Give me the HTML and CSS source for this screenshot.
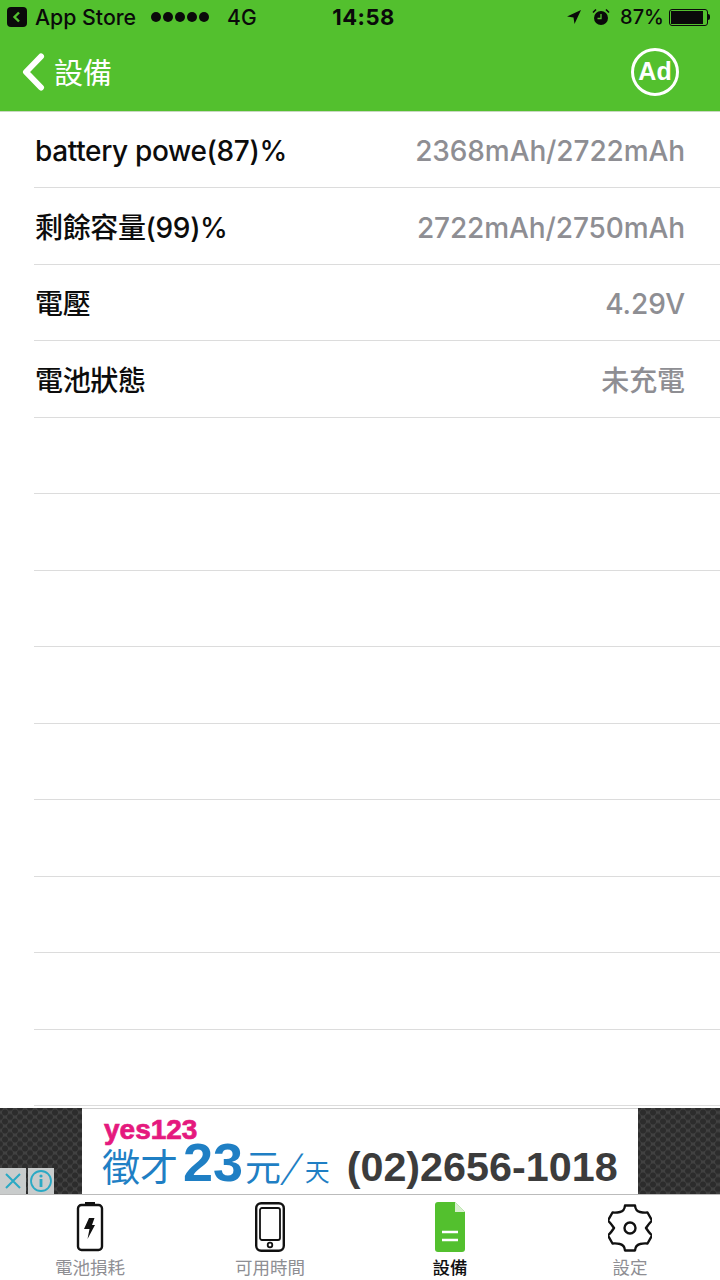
FILE: index.html
```html
<!DOCTYPE html>
<html lang="zh-Hant">
<head>
  <title>設備</title>
  <meta name="viewport" content="width=device-width, initial-scale=1">
  <link rel="stylesheet" href="styles.css">
</head>
<body>
  <div class="app">
    <header class="top">
      <div class="status">
        <div class="status-left">
          <span class="back-app">
            <svg width="20" height="20" viewBox="0 0 20 20"><rect width="20" height="20" rx="4" fill="#0a0a0a"/><path d="M12 5.500L7.500 10l4.500 4.500" fill="none" stroke="#53c02e" stroke-width="2.400"/></svg>
          </span>
          <span class="app-name">App Store</span>
          <span class="dots"><i></i><i></i><i></i><i></i><i></i></span>
          <span class="net">4G</span>
        </div>
        <div class="clock">14:58</div>
        <div class="status-right">
          <svg width="16" height="16" viewBox="0 0 16 16"><path d="M15 1L1 7.500l6.500 1 1 6.500z" fill="#0a0a0a"/></svg>
          <svg class="alarm" width="18" height="18" viewBox="0 0 18 18"><circle cx="9" cy="10" r="7" fill="#0a0a0a"/><path d="M9 6v4.500H5.500" fill="none" stroke="#53c02e" stroke-width="1.300"/><path d="M1 4.500L4 1.500M17 4.500L14 1.500" stroke="#0a0a0a" stroke-width="1.600"/></svg>
          <span class="pct">87%</span>
          <span class="batt"><span class="batt-fill"></span></span>
          <span class="batt-tip"></span>
        </div>
      </div>
      <div class="nav">
        <div class="nav-back">
          <svg width="26" height="38" viewBox="0 0 26 38"><path d="M21 3.500L6 19l15 15.500" fill="none" stroke="#fff" stroke-width="6" stroke-linecap="round" stroke-linejoin="round"/></svg>
          <span class="nav-title">設備</span>
        </div>
        <div class="ad-btn">Ad</div>
      </div>
    </header>

    <main class="list">
      <div class="row"><span class="row-name">battery powe(87)%</span><span class="row-val">2368mAh/2722mAh</span></div>
      <div class="row"><span class="row-name">剩餘容量(99)%</span><span class="row-val">2722mAh/2750mAh</span></div>
      <div class="row"><span class="row-name">電壓</span><span class="row-val">4.29V</span></div>
      <div class="row"><span class="row-name">電池狀態</span><span class="row-val">未充電</span></div>
      <div class="row"></div>
      <div class="row"></div>
      <div class="row"></div>
      <div class="row"></div>
      <div class="row"></div>
      <div class="row"></div>
      <div class="row"></div>
      <div class="row"></div>
      <div class="row"></div>
    </main>

    <div class="banner">
      <div class="banner-side">
        <div class="ad-tools">
          <span class="ad-tool"><svg width="20" height="20" viewBox="0 0 20 20"><path d="M3 3l14 14M17 3L3 17" stroke="#2aa9c4" stroke-width="2"/></svg></span>
          <span class="ad-tool"><svg width="24" height="24" viewBox="0 0 24 24"><circle cx="12" cy="12" r="10" fill="none" stroke="#2aa9c4" stroke-width="1.800"/><circle cx="12" cy="7" r="1.600" fill="#2aa9c4"/><path d="M12 10v8" stroke="#2aa9c4" stroke-width="2.800"/></svg></span>
        </div>
      </div>
      <div class="banner-main">
        <div class="yes">yes123</div>
        <div class="promo">
          <span class="promo-cjk">徵才</span><span class="promo-num">23</span><span class="promo-yuan">元</span><span class="promo-per">/</span><span class="promo-day">天</span>
          <span class="promo-tel">(02)2656-1018</span>
        </div>
      </div>
      <div class="banner-side"></div>
    </div>

    <nav class="tabs">
      <div class="tab">
        <svg width="28" height="50" viewBox="0 0 28 50"><rect x="9" y="0" width="10" height="3" fill="#111"/><rect x="2" y="3" width="24" height="45" rx="3.500" fill="none" stroke="#111" stroke-width="2.400"/><path d="M13 16H18.500L16 23H19L11.500 37L13.500 27H8Z" fill="#111"/></svg>
        <span class="tab-label">電池損耗</span>
      </div>
      <div class="tab">
        <svg width="30" height="50" viewBox="0 0 30 50"><rect x="1.200" y="1.200" width="27.600" height="47.600" rx="5" fill="none" stroke="#111" stroke-width="2.400"/><rect x="5" y="6" width="20" height="32" rx="2" fill="none" stroke="#111" stroke-width="1.800"/><circle cx="15" cy="43" r="2.300" fill="none" stroke="#111" stroke-width="1.800"/></svg>
        <span class="tab-label">可用時間</span>
      </div>
      <div class="tab tab-on">
        <svg width="30" height="50" viewBox="0 0 30 50"><path d="M3 0h17l10 10v37a3 3 0 0 1-3 3H3a3 3 0 0 1-3-3V3a3 3 0 0 1 3-3z" fill="#53c02e"/><path d="M20 0l10 10H20z" fill="#d8f0cf"/><path d="M7 30h16M7 38h16" stroke="#fff" stroke-width="2.600"/></svg>
        <span class="tab-label">設備</span>
      </div>
      <div class="tab">
        <svg width="44" height="48" viewBox="8 6 44 48"><path d="M25 7.500H35Q35.500 13 40 14Q44 15 47.500 14.500L52 22.500Q48.500 26 46 30Q48.500 34 52 37.500L47.500 45.500Q44 45 40 46Q35.500 47 35 52.500H25Q24.500 47 20 46Q16 45 12.500 45.500L8 37.500Q11.500 34 14 30Q11.500 26 8 22.500L12.500 14.500Q16 15 20 14Q24.500 13 25 7.500Z" fill="none" stroke="#111" stroke-width="2.400" stroke-linejoin="round"/><circle cx="30" cy="30" r="5.500" fill="none" stroke="#111" stroke-width="2.400"/></svg>
        <span class="tab-label">設定</span>
      </div>
    </nav>
  </div>
</body>
</html>
```

FILE: styles.css
```css
* {
  box-sizing: border-box;
}
body {
  margin: 0;
  background-color: #fff;
  font-family: Inter, "Noto Sans CJK TC", sans-serif;
}
.app {
  width: 720px;
  height: 1280px;
  display: flex;
  flex-direction: column;
  overflow: hidden;
}
.top {
  flex: 0 0 111.5px;
  background-color: #53c02e;
  border-bottom: 1px solid #c9d8c2;
}
.status {
  height: 36px;
  padding: 0 10px 2px 7px;
  display: grid;
  grid-template-columns: 1fr auto 1fr;
  align-items: center;
  color: #0a0a0a;
  font-size: 21px;
}
.status-left {
  display: flex;
  align-items: center;
}
.back-app {
  display: flex;
  margin-right: 8px;
}
.app-name {
  font-weight: 500;
  font-size: 21.3px;
  margin-right: 15px;
}
.dots {
  display: flex;
  gap: 2px;
  margin-right: 18px;
}
.dots i {
  width: 10px;
  height: 10px;
  border-radius: 50%;
  background-color: #0a0a0a;
}
.net {
  font-weight: 500;
}
.clock {
  font-size: 22px;
  font-weight: 700;
  letter-spacing: 0.5px;
  padding-left: 10px;
}
.status-right {
  display: flex;
  align-items: center;
  justify-content: flex-end;
}
.alarm {
  margin: 0 10px 0 10px;
}
.pct {
  font-size: 20px;
  font-weight: 500;
  margin-right: 5px;
}
.batt {
  width: 39px;
  height: 17px;
  padding: 1px;
  border: 1px solid #0a0a0a;
  border-radius: 3px;
  display: block;
}
.batt-fill {
  display: block;
  width: 90%;
  height: 100%;
  background-color: #0a0a0a;
}
.batt-tip {
  width: 2px;
  height: 6px;
  background-color: #0a0a0a;
  border-radius: 0 2px 2px 0;
}
.nav {
  height: 74.5px;
  padding: 0 41px 3px 22px;
  display: flex;
  align-items: center;
  justify-content: space-between;
  color: #fff;
}
.nav-back {
  display: flex;
  align-items: center;
  gap: 8px;
}
.nav-back svg {
  margin-left: -2px;
}
.nav-title {
  font-size: 29px;
  font-weight: 400;
  line-height: 38px;
  padding-top: 5px;
}
.ad-btn {
  width: 48px;
  height: 48px;
  border: 3px solid #fff;
  border-radius: 50%;
  display: flex;
  align-items: center;
  justify-content: center;
  font-family: "Liberation Sans", sans-serif;
  font-size: 25px;
  font-weight: 700;
}
.list {
  flex: 0 0 996.5px;
  display: flex;
  flex-direction: column;
  margin-left: 34px;
}
.row {
  flex: 0 0 76.5px;
  border-bottom: 1px solid #dcdcdc;
  padding: 4px 35px 0 1px;
  display: flex;
  align-items: center;
  justify-content: space-between;
}
.row-name {
  font-size: 28px;
  letter-spacing: -0.35px;
  line-height: 34px;
  font-weight: 500;
  color: #0c0c0c;
}
.row-val {
  font-size: 28px;
  letter-spacing: -0.1px;
  line-height: 34px;
  font-weight: 500;
  color: #8e8e93;
}
.banner {
  flex: 0 0 87px;
  min-height: 0;
  overflow: hidden;
  display: flex;
  border-bottom: 1px solid #bbb;
}
.banner-side {
  flex: 0 0 82px;
  position: relative;
  background-color: #414141;
  background-image: radial-gradient(circle, #2c2c2c 2.5px, transparent 3.5px), radial-gradient(circle, #2c2c2c 2.5px, transparent 3.5px);
  background-size: 10px 9px;
  background-position: 0 0, 5px 4.5px;
}
.banner-main {
  flex: 1;
  background-color: #fff;
  border-top: 1px solid #cfcfcf;
  padding: 7px 0 0 22px;
}
.ad-tools {
  position: absolute;
  left: 0;
  bottom: 0;
  display: flex;
  gap: 2px;
}
.ad-tool {
  width: 26px;
  height: 26px;
  background-color: #c9cccc;
  display: flex;
  align-items: center;
  justify-content: center;
}
.yes {
  font-family: "Liberation Sans", sans-serif;
  font-size: 28px;
  font-weight: 700;
  line-height: 28px;
  color: #e5197e;
  -webkit-text-stroke: 0.7px #e5197e;
}
.promo {
  display: flex;
  align-items: baseline;
  margin-top: -5px;
  margin-left: -2px;
  color: #1f7fc4;
  line-height: 46px;
}
.promo-cjk {
  font-size: 38px;
  font-weight: 400;
}
.promo-num {
  font-family: "Liberation Sans", sans-serif;
  font-size: 54px;
  font-weight: 700;
  margin: 0 2px 0 5px;
}
.promo-yuan {
  font-size: 36px;
}
.promo-per {
  font-size: 36px;
  margin: 0 6px 0 5px;
  font-weight: 300;
  transform: skewX(-22deg);
}
.promo-day {
  font-size: 25px;
}
.promo-tel {
  font-family: "Liberation Sans", sans-serif;
  font-size: 41.3px;
  font-weight: 700;
  color: #3c3c3c;
  margin-left: 17px;
}
.tabs {
  flex: 1;
  display: grid;
  grid-template-columns: repeat(4, 180px);
}
.tab {
  height: 85px;
  display: flex;
  flex-direction: column;
  align-items: center;
  justify-content: flex-end;
  padding-bottom: 2px;
}
.tab svg {
  margin-bottom: 6px;
}
.tab-label {
  font-size: 17.5px;
  line-height: 20px;
  color: #8e8e93;
}
.tab-on .tab-label {
  color: #111;
  font-weight: 500;
}
```
